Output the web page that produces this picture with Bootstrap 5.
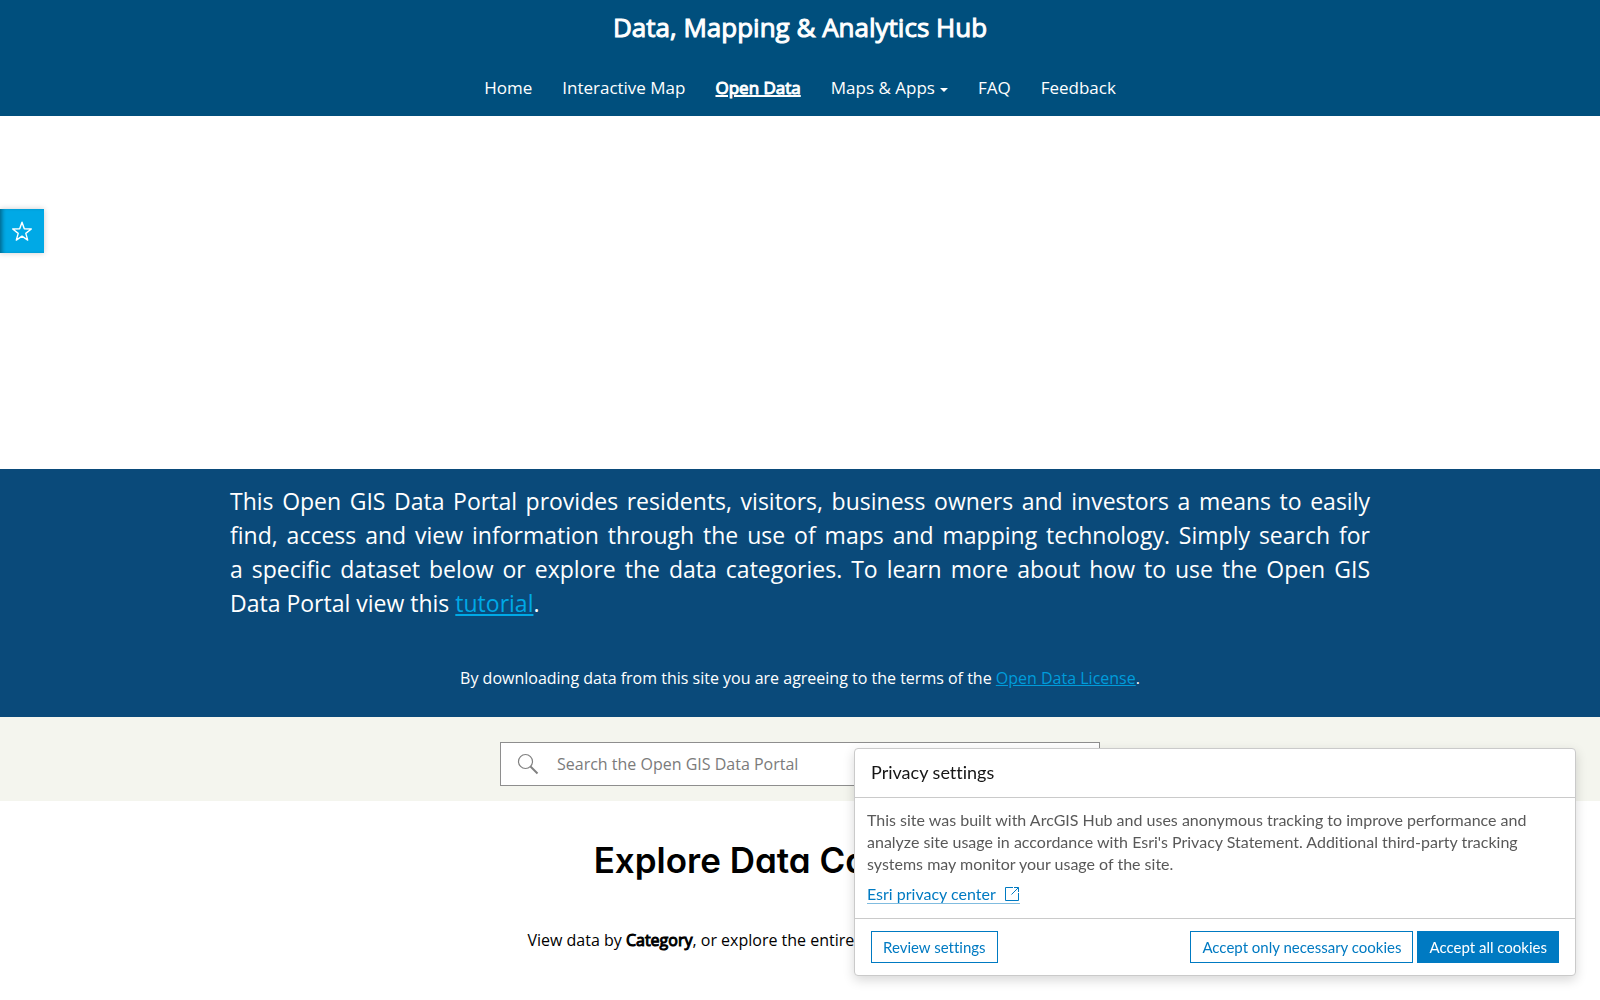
<!DOCTYPE html>
<html lang="en">
<head>
<meta charset="utf-8">
<meta name="viewport" content="width=device-width, initial-scale=1">
<title>Data, Mapping &amp; Analytics Hub</title>
<link href="https://cdn.jsdelivr.net/npm/bootstrap@5.3.0/dist/css/bootstrap.min.css" rel="stylesheet">
<style>
body{font-family:"Open Sans",sans-serif;font-size:16px;line-height:24px;color:#000}
.site-head{background:#004f7d;padding-bottom:11px}
.site-title{font-size:26px;line-height:36px;padding:9px 15px 26px}
.faux-strong{font-weight:400;-webkit-text-stroke:1px currentColor}
.site-nav .nav-link{color:#fff;font-size:17px;line-height:24px;padding:5px 15px}
.site-nav .nav-link.active{text-decoration:underline 2px}
.site-nav .dropdown-toggle::after{border-top-width:4px;border-left-width:4px;border-right-width:4px;margin-left:5px;vertical-align:2px}
.hero{height:353px}
.hub-wrap{max-width:1170px;padding:0 15px}
.about{background:#0a4a7a;color:#fff;padding:15px 0 27px}
.about a{color:#00a9e6}
.about .license-link{color:#009cdb}
.about-text{font-size:23px;line-height:34px;text-align:justify;margin-bottom:46px}
.find-band{background:#f4f5ee;padding:25px 15px 15px}
.find-box{max-width:600px;height:44px;border:1px solid #8e8e8e;background:#fff;padding:0 16px}
.find-box .form-control{font-size:16px;padding:0 0 0 18px;border:0;border-radius:0;height:42px;background:none;box-shadow:none}
.find-box .form-control::placeholder{color:#7b7b7b}
.explore-title{font-family:Inter,sans-serif;font-feature-settings:"cv11";font-weight:600;font-size:35px;line-height:44px;margin:37px 0 46px}
.follow-btn{position:fixed;left:0;top:209px;width:44px;height:44px;padding:0;border:0;background:#00a9e6;box-shadow:inset 4px 0 4px -2px rgba(0,0,0,.4),0 0 6px rgba(0,0,0,.2)}
.privacy{position:fixed;right:24px;bottom:24px;width:722px;max-width:calc(100% - 48px);background:#fff;border:1px solid #cacaca;border-radius:4px;box-shadow:0 4px 12px rgba(0,0,0,.16);font-family:Lato,sans-serif;font-variant-ligatures:none;color:#595959}
.privacy h2{font-size:18px;line-height:24px;font-weight:400;color:#151515;padding:11px 16px 13px;margin:0;border-bottom:1px solid #cacaca}
.privacy-body{font-size:16px;line-height:22px;padding:11px 12px 13px}
.privacy-body p{margin-bottom:8px}
.privacy-body a{color:#007ac2;text-decoration:none;border-bottom:1px solid #80bce0;line-height:18px}
.privacy-foot{border-top:1px solid #cacaca;padding:12px 16px}
.privacy .btn{border-radius:0;font-size:15px;line-height:20px;padding:5px 11px;font-variant-ligatures:none;--bs-btn-color:#007ac2;--bs-btn-border-color:#007ac2}
.privacy .btn-fill{background:#007ac2;color:#fff}
</style>
<script src="https://cdn.jsdelivr.net/npm/bootstrap@5.3.0/dist/js/bootstrap.bundle.min.js"></script>
</head>
<body>
<header class="site-head text-white text-center">
  <h1 class="site-title faux-strong mb-0">Data, Mapping &amp; Analytics Hub</h1>
  <nav class="site-nav" aria-label="Main">
    <ul class="nav justify-content-center">
      <li class="nav-item"><a class="nav-link" href="#">Home</a></li>
      <li class="nav-item"><a class="nav-link" href="#">Interactive Map</a></li>
      <li class="nav-item"><a class="nav-link active faux-strong" aria-current="page" href="#">Open Data</a></li>
      <li class="nav-item dropdown"><a class="nav-link dropdown-toggle" href="#" role="button" data-bs-toggle="dropdown">Maps &amp; Apps</a></li>
      <li class="nav-item"><a class="nav-link" href="#">FAQ</a></li>
      <li class="nav-item"><a class="nav-link" href="#">Feedback</a></li>
    </ul>
  </nav>
</header>
<main>
  <div class="hero"></div>
  <section class="about">
    <div class="hub-wrap mx-auto">
      <p class="about-text">This Open GIS Data Portal provides residents, visitors, business owners and investors a means to easily find, access and view information through the use of maps and mapping technology. Simply search for a&nbsp;specific dataset below or explore the data categories. To learn more about how to use the Open GIS Data Portal view this <a href="#">tutorial</a>.</p>
      <p class="text-center mb-0">By downloading data from this site you are agreeing to the terms of the <a class="license-link" href="#">Open Data License</a>.</p>
    </div>
  </section>
  <section class="find-band">
    <form class="find-box d-flex align-items-center mx-auto" role="search">
      <label for="find" class="d-flex"><svg width="22" height="22" viewBox="0 0 22 22" fill="none" stroke="#808080" aria-hidden="true"><circle cx="8.500" cy="8.500" r="7" stroke-width="1.200"/><path d="M13.500 13.500l7 7" stroke-width="2"/></svg></label>
      <input id="find" type="search" class="form-control" placeholder="Search the Open GIS Data Portal" aria-label="Search">
    </form>
  </section>
  <section class="hub-wrap mx-auto text-center">
    <h2 class="explore-title">Explore Data Categories</h2>
    <p class="mb-0">View data by <span class="faux-strong">Category</span>, or explore the entire Open GIS Data Portal library.</p>
  </section>
</main>
<button class="follow-btn d-flex align-items-center justify-content-center" type="button" aria-label="Follow"><svg width="22" height="22" viewBox="0 0 22 22" fill="none" stroke="#fff" stroke-width="1.400" stroke-linejoin="round" aria-hidden="true"><path d="M11 2.200l2.300 6.600 7 .2-5.500 4.400 1.900 6.700L11 16.200l-5.700 3.900 1.900-6.700L1.700 9l7-.2z"/></svg></button>
<aside class="privacy" aria-label="Privacy settings">
  <h2>Privacy settings</h2>
  <div class="privacy-body">
    <p>This site was built with ArcGIS Hub and uses anonymous tracking to improve performance and analyze site usage in accordance with Esri's Privacy Statement. Additional third-party tracking systems may monitor your usage of the site.</p>
    <a href="#" class="d-inline-flex align-items-center gap-2">Esri privacy center <svg width="16" height="16" viewBox="0 0 16 16" fill="none" stroke="#007ac2" aria-hidden="true"><path d="M9 1.500H1.500v13h13V7M10 1.500h4.500V6M14.500 1.500l-7 7"/></svg></a>
  </div>
  <div class="privacy-foot d-flex gap-1">
    <button type="button" class="btn me-auto">Review settings</button>
    <button type="button" class="btn">Accept only necessary cookies</button>
    <button type="button" class="btn btn-fill">Accept all cookies</button>
  </div>
</aside>
</body>
</html>
